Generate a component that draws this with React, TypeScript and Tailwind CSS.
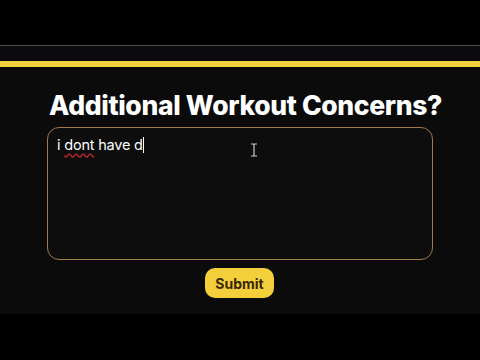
export default function App() {
  return (
    <div className="w-[480px] h-[360px] bg-black flex flex-col" style={{ fontFamily: 'Inter, "Liberation Sans", sans-serif' }}>
      <div className="h-[45px]" />
      <div className="h-[269px] bg-[#0c0b0b] border-t border-[#4d4d4d] flex flex-col">
        <div className="h-[15px] bg-[#0b0b0d]" />
        <div className="h-[6px] bg-[#f2cf3d]" />
        <h1 className="mt-[20px] text-center text-white font-extrabold text-[26.5px] leading-[36px] tracking-[-0.35px] pl-[11px]">
          Additional Workout Concerns?
        </h1>
        <div className="mx-[47px] mt-[4px] h-[133px] rounded-[12px] border-[1.5px] border-[#a27b48] bg-[#0d0d0d] relative px-[9px] py-[7px]">
          <p className="text-white text-[14.5px] leading-[20px] tracking-[-0.2px]">
            i <span className="underline decoration-wavy decoration-[#b0242b] underline-offset-[3px]">dont</span> have d
            <span className="inline-block w-[1px] h-[16px] bg-white align-[-3px]" />
          </p>
          <svg className="absolute left-[202px] top-[15px]" width="8" height="14" viewBox="0 0 8 14">
            <path d="M1 1h2.5l.5.6.5-.6H7M4 1.6v10.8M1 13h2.5l.5-.6.5.6H7" stroke="#c8c8c8" strokeWidth="1.2" fill="none" />
          </svg>
        </div>
        <div className="flex justify-center mt-[8px]">
          <button className="w-[69px] h-[30px] rounded-[10px] bg-[#f4cf3c] text-[#3a2608] font-bold text-[14px] ml-[-1px]">
            Submit
          </button>
        </div>
      </div>
    </div>
  )
}
